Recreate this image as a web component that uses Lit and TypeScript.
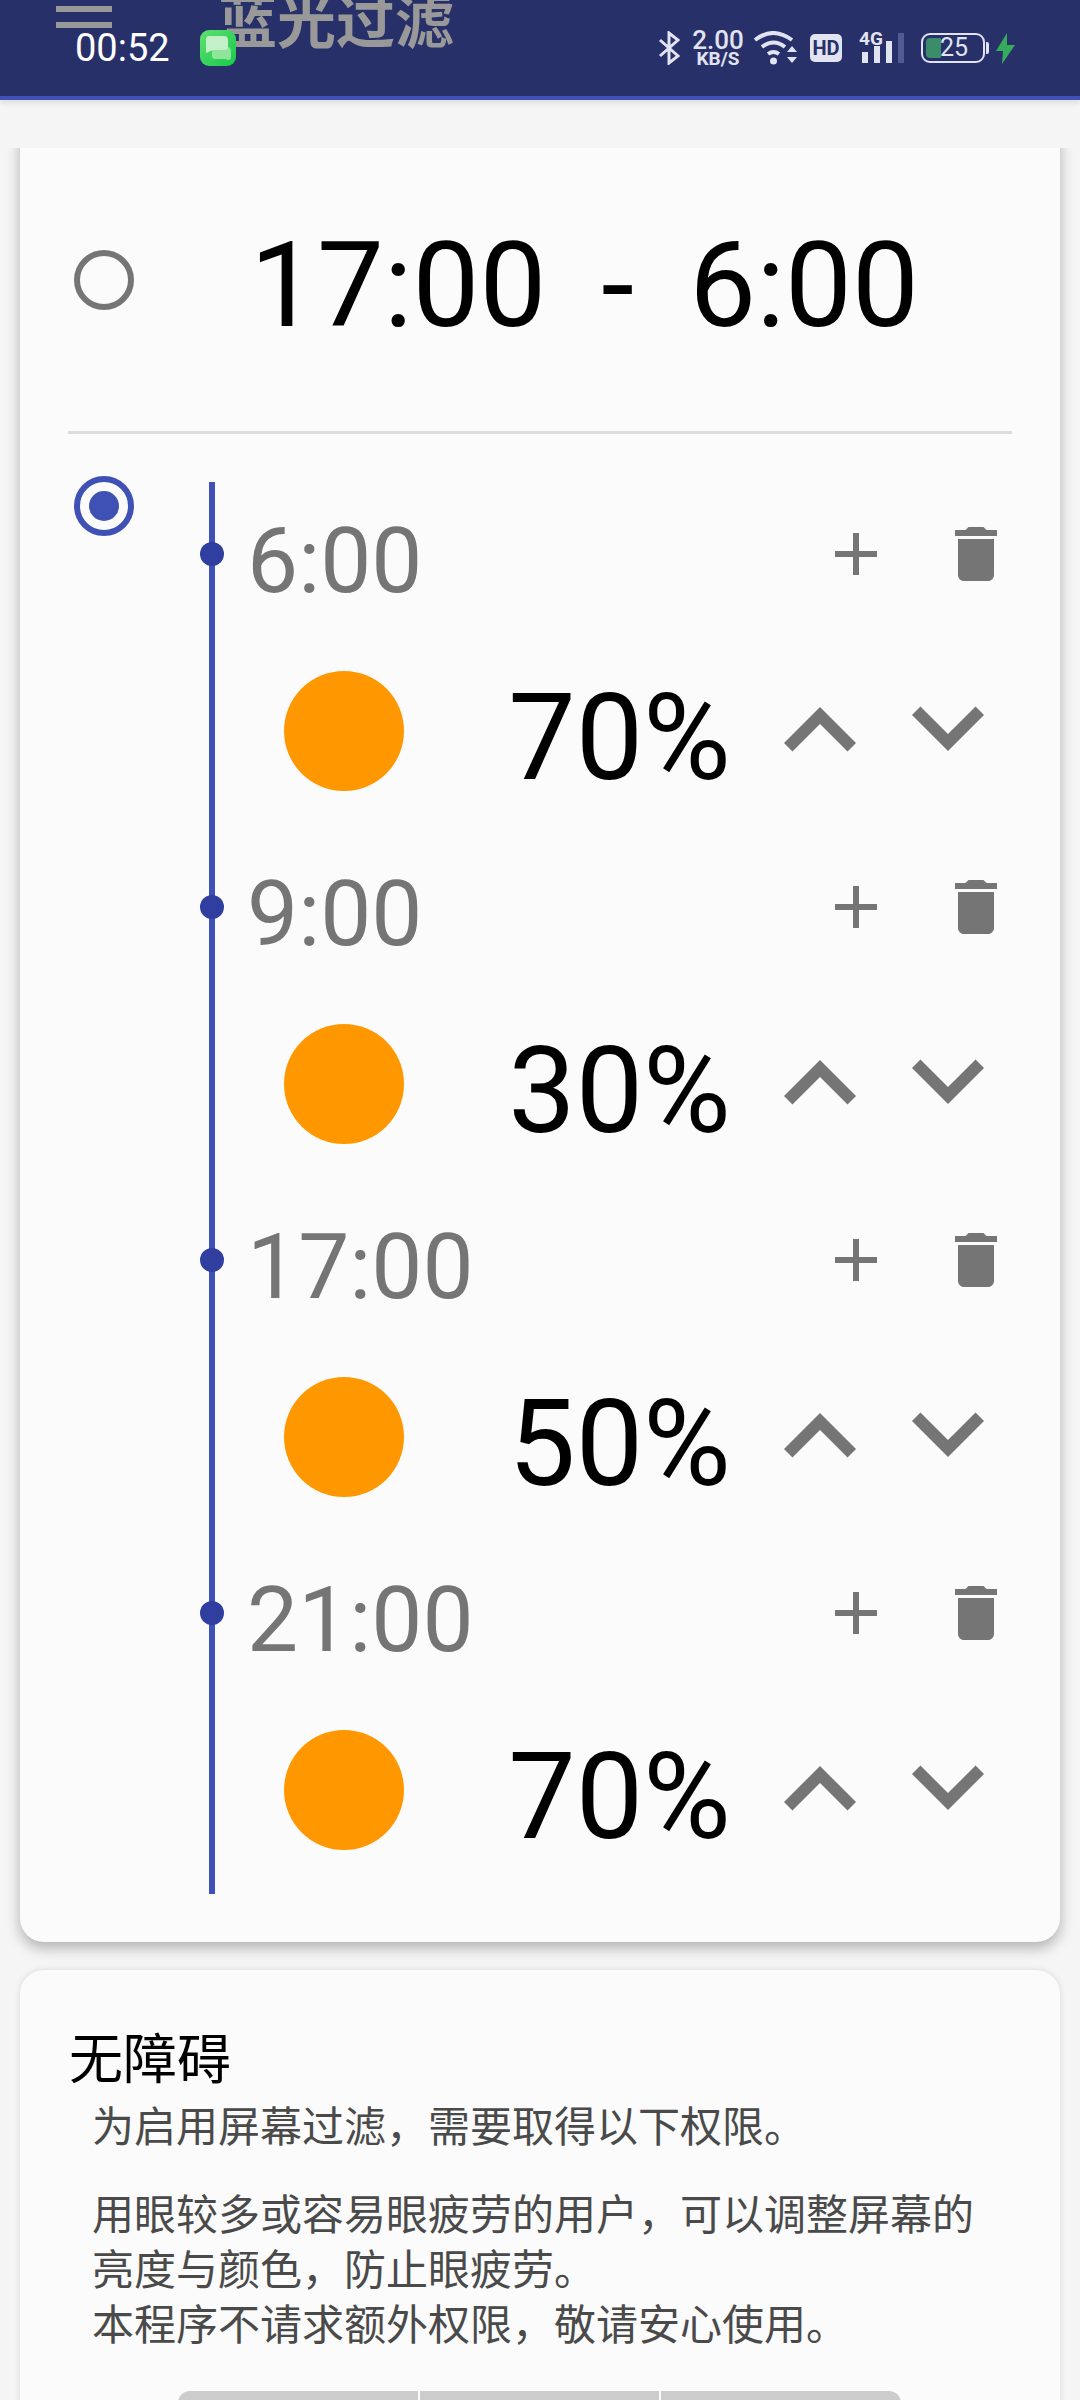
import { LitElement, html, css, svg } from "lit";
import { customElement } from "lit/decorators.js";

const ENTRIES = [
  { time: "6:00", level: "70%" },
  { time: "9:00", level: "30%" },
  { time: "17:00", level: "50%" },
  { time: "21:00", level: "70%" },
];

const ICON_ADD = svg`<path d="M19 13h-6v6h-2v-6H5v-2h6V5h2v6h6v2z"/>`;
const ICON_DELETE = svg`<path d="M6 19c0 1.1.9 2 2 2h8c1.1 0 2-.9 2-2V7H6v12zM19 4h-3.5l-1-1h-5l-1 1H5v2h14V4z"/>`;
const ICON_UP = svg`<path d="M7.41 15.41L12 10.83l4.59 4.58L18 14l-6-6-6 6z"/>`;
const ICON_DOWN = svg`<path d="M7.41 8.59L12 13.17l4.59-4.58L18 10l-6 6-6-6z"/>`;

@customElement("status-bar")
export class StatusBar extends LitElement {
  static styles = css`
    :host {
      position: absolute;
      top: 0;
      left: 0;
      right: 0;
      height: 96px;
      display: flex;
      align-items: center;
      padding: 0 65px 0 75px;
      box-sizing: border-box;
      font-family: Roboto, sans-serif;
      color: #e1e3f1;
    }
    svg {
      display: block;
      flex: none;
    }
    .time {
      width: 94px;
      color: #fff;
      font-size: 38px;
      line-height: 44px;
    }
    .msg {
      margin-left: 31px;
    }
    .right {
      margin-left: auto;
      display: flex;
      align-items: center;
    }
    .speed {
      width: 50px;
      margin: 0 10px 0 13px;
      display: flex;
      flex-direction: column;
      align-items: center;
      font-weight: 500;
    }
    .speed .num {
      font-size: 26px;
      line-height: 20px;
    }
    .speed .unit {
      font-size: 19px;
      line-height: 16px;
      font-weight: 700;
      margin-top: 1px;
    }
    .hd {
      width: 32px;
      height: 28px;
      margin: 0 17px 0 12px;
      border-radius: 5px;
      background: #e1e3f1;
      color: #283069;
      font-size: 20px;
      font-weight: 700;
      line-height: 28px;
      text-align: center;
    }
    .net {
      width: 46px;
      height: 34px;
      position: relative;
    }
    .net .g {
      position: absolute;
      left: 0;
      top: -1px;
      font-size: 19px;
      line-height: 17px;
      font-weight: 700;
    }
    .batt {
      width: 64px;
      height: 30px;
      margin-left: 16px;
      box-sizing: border-box;
      border: 2px solid #e1e3f1;
      border-radius: 9px;
      position: relative;
      font-size: 25px;
      line-height: 26px;
      text-indent: 17px;
    }
    .batt i {
      position: absolute;
      left: 3px;
      top: 3px;
      bottom: 3px;
      width: 15px;
      background: #3b8c68;
      border-radius: 4px 1px 1px 4px;
    }
    .batt span {
      position: relative;
    }
    .nub {
      width: 3px;
      height: 12px;
      margin: 0 7px 0 1px;
      border-radius: 0 2px 2px 0;
      background: #e1e3f1;
    }
  `;

  render() {
    return html`
      <span class="time">00:52</span>
      <svg class="msg" width="36" height="36" viewBox="0 0 36 36">
        <defs>
          <linearGradient id="m" x1="0" y1="0" x2="1" y2="1">
            <stop offset="0" stop-color="#5fe070" />
            <stop offset="1" stop-color="#17c94a" />
          </linearGradient>
        </defs>
        <rect width="36" height="36" rx="9" fill="url(#m)" />
        <path d="M12 17h15q4 0 4 4v6q0 3-3 3l-2-1h-11q-3 0-3-3z" fill="#8fe59a" />
        <path d="M9 6h15q4 0 4 4v7q0 3-3 3H13l-7 3V10q0-4 3-4z" fill="#c4f0c8" />
      </svg>
      <div class="right">
        <svg width="22" height="34" viewBox="0 0 22 34" fill="none" stroke="#e1e3f1" stroke-width="3">
          <path d="M2 9l18 16-9 7V2l9 7L2 25" />
        </svg>
        <div class="speed"><span class="num">2.00</span><span class="unit">KB/S</span></div>
        <svg width="45" height="34" viewBox="0 0 45 34" fill="none" stroke="#e1e3f1" stroke-width="4">
          <path d="M2 9Q20-5 39 9" />
          <path d="M9 16Q20.500 7 32 16" />
          <path d="M15 23Q20.500 19 26 23" />
          <circle cx="20.500" cy="30" r="3.500" fill="#e1e3f1" stroke="none" />
          <path d="M34 21l5-6 5 6zM34 26l5 6 5-6z" fill="#e1e3f1" stroke="none" />
        </svg>
        <div class="hd">HD</div>
        <div class="net">
          <span class="g">4G</span>
          <svg width="46" height="34" viewBox="0 0 46 34">
            <rect x="3" y="21" width="6" height="11" fill="#e1e3f1" />
            <rect x="15" y="15" width="6" height="17" fill="#e1e3f1" />
            <rect x="27" y="10" width="6" height="22" fill="#e1e3f1" />
            <rect x="39" y="2" width="6" height="30" fill="#525a91" />
          </svg>
        </div>
        <div class="batt"><i></i><span>25</span></div>
        <div class="nub"></div>
        <svg width="19" height="31" viewBox="0 0 19 31">
          <path d="M11 0L0 18h7L6 31 19 12h-8z" fill="#35ac5b" />
        </svg>
      </div>
    `;
  }
}

@customElement("app-root")
export class AppRoot extends LitElement {
  static styles = css`
    :host {
      display: block;
      position: relative;
      height: 2400px;
      overflow: hidden;
      background: #f5f5f5;
      font-family: Roboto, "Noto Sans CJK SC", sans-serif;
    }
    .toolbar {
      height: 96px;
      background: #283069;
      border-bottom: 4px solid #3f51b5;
      box-shadow: 0 3px 6px rgba(0, 0, 0, 0.1);
      display: flex;
      align-items: flex-start;
      overflow: hidden;
      color: #999;
    }
    .burger {
      width: 56px;
      flex: none;
      margin: -10px 0 0 56px;
      display: flex;
      flex-direction: column;
      gap: 10px;
    }
    .burger i {
      height: 6px;
      background: #999;
    }
    .title {
      margin: -12px 0 0 106px;
      font-family: "Noto Sans CJK SC", sans-serif;
      font-size: 59px;
      line-height: 60px;
      font-weight: 700;
    }
    .scroller {
      height: 2252px;
      margin-top: 48px;
      padding: 0 20px;
      overflow: hidden;
      position: relative;
    }
    .card {
      background: #fbfbfb;
      border-radius: 24px;
    }
    .schedule {
      margin-top: -30px;
      padding-top: 30px;
      box-shadow: 0 6px 14px rgba(0, 0, 0, 0.28);
    }
    .range {
      height: 283px;
      box-sizing: border-box;
      padding: 0 0 20px 54px;
      display: flex;
      align-items: center;
    }
    .radio {
      width: 60px;
      height: 60px;
      flex: none;
      box-sizing: border-box;
      border: 6px solid #757575;
      border-radius: 50%;
      display: flex;
      align-items: center;
      justify-content: center;
    }
    .radio.on {
      border-color: #3f51b5;
    }
    .radio.on i {
      width: 30px;
      height: 30px;
      border-radius: 50%;
      background: #3f51b5;
    }
    .range-text {
      margin: 12px 0 0 116px;
      font-size: 119px;
      line-height: 150px;
      word-spacing: -2px;
      color: #000;
      white-space: pre;
    }
    .divider {
      height: 3px;
      margin: 0 48px 0 48px;
      background: #ddd;
    }
    .timeline {
      display: flex;
      align-items: flex-start;
      padding: 42px 48px 48px 54px;
    }
    .list {
      flex: 1;
      margin: 6px 0 0 75px;
      padding-top: 36px;
      border-left: 6px solid #3f51b5;
      height: 1376px;
    }
    .entry {
      height: 353px;
    }
    .head {
      height: 72px;
      display: flex;
      align-items: center;
    }
    .dot {
      width: 24px;
      height: 24px;
      flex: none;
      margin-left: -15px;
      border-radius: 50%;
      background: #303f9f;
    }
    .time {
      flex: 1;
      margin: 13px 0 0 23px;
      font-size: 91px;
      line-height: 72px;
      color: #757575;
    }
    .icon {
      display: block;
      flex: none;
      fill: #757575;
    }
    .head .icon + .icon {
      margin-left: 48px;
    }
    .body {
      margin-top: 69px;
      height: 144px;
      display: flex;
      align-items: center;
      padding-left: 69px;
    }
    .sun {
      width: 120px;
      height: 120px;
      flex: none;
      border-radius: 50%;
      background: #ff9800;
    }
    .level {
      flex: 1;
      margin-top: 14px;
      padding-right: 17px;
      text-align: right;
      font-size: 120px;
      line-height: 136px;
      color: #000;
    }
    .down {
      margin: 0 -8px 8px -16px;
    }
    .access {
      margin-top: 28px;
      padding: 56px 0 0 49px;
      height: 600px;
      box-shadow: 0 0 6px rgba(0, 0, 0, 0.12);
    }
    .access h2 {
      margin: 0;
      font-family: "Noto Sans CJK SC", sans-serif;
      font-size: 54px;
      line-height: 60px;
      font-weight: 400;
      color: #000;
    }
    .access p {
      margin: 0 0 33px 23px;
      font-family: "Noto Sans CJK SC", sans-serif;
      font-size: 42px;
      line-height: 55px;
      color: #4a4a4a;
    }
    .copy {
      margin-top: 10px;
    }
    .actions {
      display: flex;
      gap: 2px;
      margin: 42px 0 0 109px;
      width: 723px;
    }
    .actions i {
      flex: 1;
      height: 40px;
      background: #ccc;
    }
    .actions i:first-child {
      border-top-left-radius: 12px;
    }
    .actions i:last-child {
      border-top-right-radius: 12px;
    }
  `;

  private icon(path: unknown, size: number, cls = "") {
    return html`<svg class="icon ${cls}" width=${size} height=${size} viewBox="0 0 24 24">${path}</svg>`;
  }

  render() {
    return html`
      <div class="toolbar">
        <div class="burger"><i></i><i></i><i></i></div>
        <div class="title">蓝光过滤</div>
      </div>
      <status-bar></status-bar>
      <div class="scroller">
        <section class="card schedule">
          <div class="range">
            <div class="radio"></div>
            <div class="range-text">17:00  -  6:00</div>
          </div>
          <div class="divider"></div>
          <div class="timeline">
            <div class="radio on"><i></i></div>
            <div class="list">
              ${ENTRIES.map(
                (e) => html`
                  <div class="entry">
                    <div class="head">
                      <div class="dot"></div>
                      <div class="time">${e.time}</div>
                      ${this.icon(ICON_ADD, 72)} ${this.icon(ICON_DELETE, 72)}
                    </div>
                    <div class="body">
                      <div class="sun"></div>
                      <div class="level">${e.level}</div>
                      ${this.icon(ICON_UP, 144)} ${this.icon(ICON_DOWN, 144, "down")}
                    </div>
                  </div>
                `
              )}
            </div>
          </div>
        </section>
        <section class="card access">
          <h2>无障碍</h2>
          <div class="copy">
            <p>为启用屏幕过滤，需要取得以下权限。</p>
            <p>用眼较多或容易眼疲劳的用户，可以调整屏幕的<br />亮度与颜色，防止眼疲劳。<br />本程序不请求额外权限，敬请安心使用。</p>
          </div>
          <div class="actions"><i></i><i></i><i></i></div>
        </section>
      </div>
    `;
  }
}
